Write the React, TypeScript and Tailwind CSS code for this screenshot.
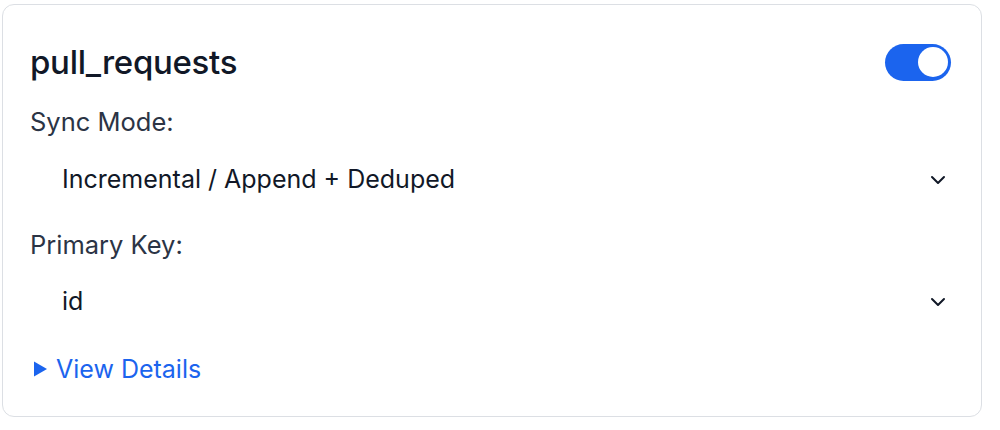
export default function App() {
  return (
    <div className="bg-white w-[1000px] h-[430px] pt-[4px] pl-[2px] font-['Inter',sans-serif]">
      <div className="w-[980px] h-[413px] border border-[#dcdfe4] rounded-[12px] bg-white pl-[27px] pr-[30px]">
        <div className="flex items-center justify-between pt-[37px]">
          <h1 className="text-[33px] leading-[40px] text-[#111827] font-medium tracking-[-0.3px]">pull_requests</h1>
          <div className="w-[66px] h-[37px] rounded-full bg-[#1b64ee] flex items-center justify-end pr-[3px]">
            <div className="w-[30px] h-[30px] rounded-full bg-white" />
          </div>
        </div>
        <div className="mt-[22px] text-[25.5px] leading-[36px] text-[#2b3445]">Sync Mode:</div>
        <div className="flex items-center justify-between h-[50px] mt-[15px] pl-[32px] pr-[5px]">
          <span className="text-[25px] text-[#111827]">Incremental / Append + Deduped</span>
          <svg width="16" height="10" viewBox="0 0 16 10" fill="none" stroke="#111827" strokeWidth="2" strokeLinecap="round" strokeLinejoin="round">
            <path d="M2 2l6 6 6-6" />
          </svg>
        </div>
        <div className="mt-[22px] text-[25.5px] leading-[36px] text-[#2b3445]">Primary Key:</div>
        <div className="flex items-center justify-between h-[50px] mt-[14px] pl-[32px] pr-[5px]">
          <span className="text-[25px] text-[#111827]">id</span>
          <svg width="16" height="10" viewBox="0 0 16 10" fill="none" stroke="#111827" strokeWidth="2" strokeLinecap="round" strokeLinejoin="round">
            <path d="M2 2l6 6 6-6" />
          </svg>
        </div>
        <div className="flex items-center gap-[9px] mt-[26px] pl-[4px] text-[#1b64ee]">
          <svg width="13" height="16" viewBox="0 0 13 16">
            <path d="M0 0.5L13 8L0 15.5Z" fill="#1b64ee" />
          </svg>
          <span className="text-[25px] leading-[32px]">View Details</span>
        </div>
      </div>
    </div>
  );
}
